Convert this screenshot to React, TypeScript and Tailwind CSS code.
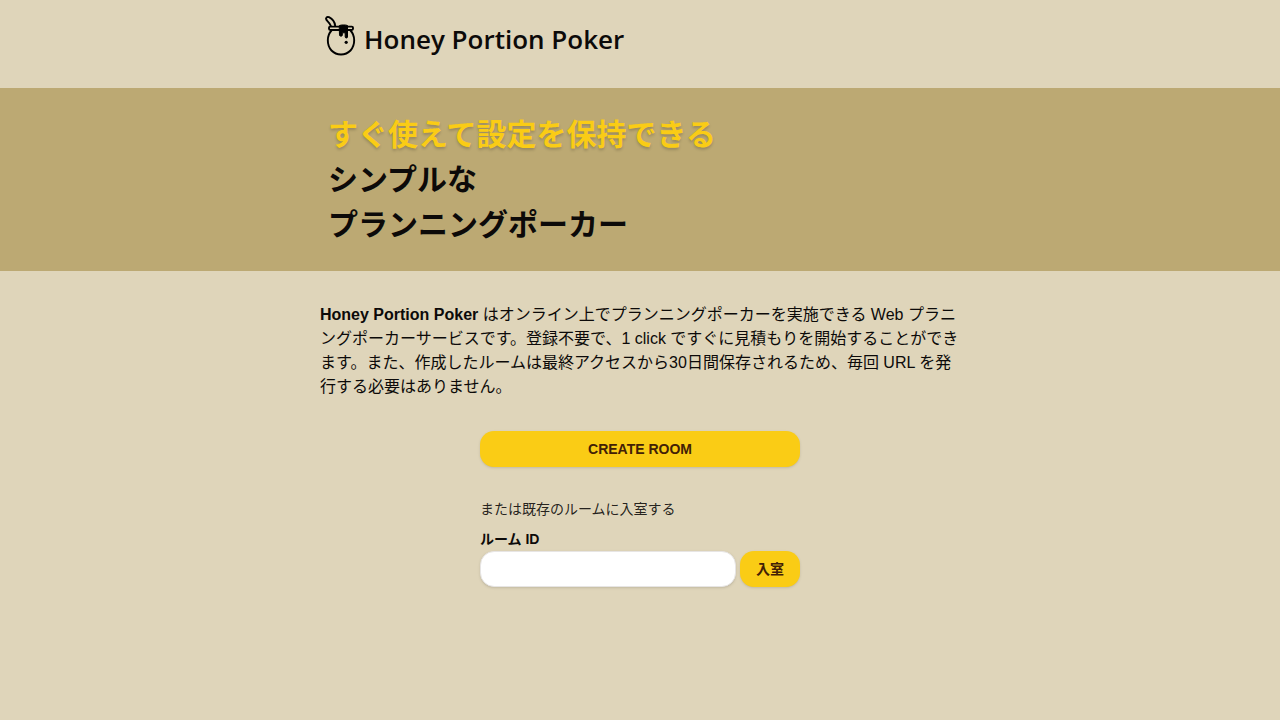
function HoneyPot() {
  return (
    <svg
      viewBox="0 0 40 44"
      className="h-11 w-10 shrink-0"
      fill="none"
      stroke="#000"
      strokeWidth="1.9"
      strokeLinecap="round"
      strokeLinejoin="round"
      aria-hidden="true"
    >
      <path d="M15.200 11.800C14.800 8.200 12.500 5 9 3.200C6.800 2.300 5.200 4.200 6.500 6C8 7.600 9.700 9 10.800 11.800" />
      <rect x="9" y="12.600" width="24" height="3.400" rx="1.200" />
      <path d="M11.500 16.500C6.700 21.500 6.500 31 11.500 36.500C16.500 41.800 25.500 41.800 30.500 36.500C35.500 31 35.300 21.500 30.500 16.500" />
      <path
        fill="#000"
        strokeWidth="1"
        d="M19.500 11.500C20.500 10.700 26 10.700 27.500 11.500V23C27.500 24.300 25.200 24.300 25.200 23V18.800H22.300V21.300C22.300 22.500 19.500 22.500 19.500 21.300Z"
      />
      <circle cx="26.200" cy="28.300" r="1.600" fill="#000" stroke="none" />
    </svg>
  );
}

const buttonClass =
  "h-9 rounded-[14px] bg-[#facc15] px-4 text-sm font-bold text-[#422006] shadow-sm hover:bg-[#facc15]/90";

export default function App() {
  return (
    <div className="min-h-screen bg-[#dfd5ba] font-['Liberation_Sans','Noto_Sans_CJK_JP',sans-serif] text-[#0c0a09]">
      <header className="mx-auto max-w-[640px] pt-3.5 pb-7.5">
        <a href="/" className="flex items-center gap-1">
          <HoneyPot />
          <span className="pt-1.5 font-['Open_Sans',sans-serif] text-[26px] leading-9 font-semibold">
            Honey Portion Poker
          </span>
        </a>
      </header>
      <section className="bg-[#bca973] py-6">
        <h1 className="mx-auto max-w-[640px] px-2 text-[30px] leading-[45px] font-bold">
          <span className="block text-[#facc15] [text-shadow:0_2px_3px_rgba(0,0,0,0.2)]">
            すぐ使えて設定を保持できる
          </span>
          <span className="block">シンプルな</span>
          <span className="block">プランニングポーカー</span>
        </h1>
      </section>
      <main className="mx-auto max-w-[640px] py-8">
        <p className="leading-6">
          <strong>Honey Portion Poker</strong>{" "}
          はオンライン上でプランニングポーカーを実施できる Web
          プラニングポーカーサービスです。登録不要で、1 click
          ですぐに見積もりを開始することができます。また、作成したルームは最終アクセスから30日間保存されるため、毎回
          URL を発行する必要はありません。
        </p>
        <div className="mx-auto mt-8 max-w-80">
          <button type="button" className={`w-full ${buttonClass}`}>
            CREATE ROOM
          </button>
          <p className="mt-8 text-sm leading-5 text-[#0c0a09]/90">または既存のルームに入室する</p>
          <form className="mt-2" onSubmit={(e) => e.preventDefault()}>
            <label htmlFor="room-id" className="block text-sm leading-6 font-bold">
              ルーム ID
            </label>
            <div className="flex gap-1">
              <input
                id="room-id"
                type="text"
                className="h-9 min-w-0 flex-1 rounded-[14px] border border-[#e7e5e4] bg-white px-3 text-sm shadow-sm outline-none focus:ring-1 focus:ring-[#facc15]"
              />
              <button type="submit" className={buttonClass}>
                入室
              </button>
            </div>
          </form>
        </div>
      </main>
    </div>
  );
}
